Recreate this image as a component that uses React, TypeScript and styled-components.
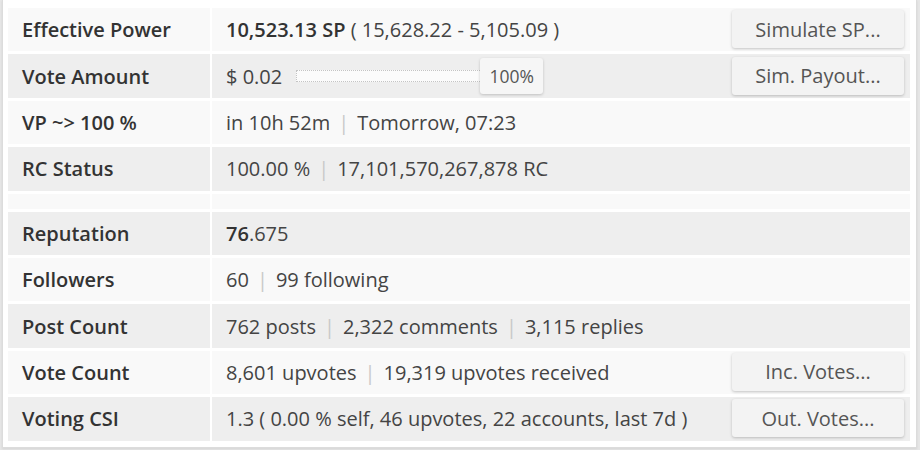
import React from "react";
import styled, { createGlobalStyle } from "styled-components";

const Global = createGlobalStyle`
  html, body { margin: 0; padding: 0; }
  body {
    background: #e6e6e6;
    font-family: "Open Sans", "Liberation Sans", sans-serif;
    width: 920px;
    height: 450px;
    overflow: hidden;
  }
`;

const Card = styled.div`
  margin-left: 2px;
  width: 902px;
  background: #ffffff;
  border: 1px solid #dcdcdc;
  border-top: none;
  padding: 8px 6px 6px 5px;
  box-shadow: 0 1px 2px rgba(0, 0, 0, 0.08);
`;

const Table = styled.div`
  display: flex;
  flex-direction: column;
  gap: 3px;
`;

const Row = styled.div<{ $dark?: boolean; $spacer?: boolean }>`
  display: grid;
  grid-template-columns: 202px 1fr;
  column-gap: 2px;
  height: ${(p) => (p.$spacer ? "15px" : "43.4px")};
  & > div {
    background: ${(p) => (p.$dark ? "#eeeeee" : "#f9f9f9")};
  }
`;

const Label = styled.div`
  display: flex;
  align-items: center;
  padding-left: 14px;
  font-size: 20px;
  font-weight: 600;
  color: #333;
`;

const Value = styled.div`
  display: flex;
  align-items: center;
  padding: 0 6px 0 14px;
  font-size: 20px;
  color: #444;
  white-space: nowrap;
`;

const Text = styled.span`
  flex: 1;
`;

const Strong = styled.b`
  font-weight: 600;
  color: #333;
`;

const Sep = styled.span`
  color: #c8c8c8;
  margin: 0 8px;
`;

const Button = styled.button`
  width: 172px;
  height: 38px;
  margin-top: -1px;
  border: none;
  border-radius: 3px;
  background: #f3f3f3;
  box-shadow: 0 1px 3px rgba(0, 0, 0, 0.22);
  font-family: inherit;
  font-size: 20px;
  color: #555;
  cursor: pointer;
`;

const Slider = styled.div`
  display: flex;
  align-items: center;
  margin-left: 14px;
  flex: 1;
`;

const Track = styled.div`
  width: 183px;
  height: 10px;
  border: 1px dotted #c4c4c4;
  border-right: none;
  background: #fbfbfb;
`;

const Thumb = styled.div`
  width: 63px;
  height: 36px;
  display: flex;
  align-items: center;
  justify-content: center;
  border-radius: 3px;
  background: #f6f6f6;
  box-shadow: 0 1px 3px rgba(0, 0, 0, 0.2);
  font-size: 17.5px;
  color: #555;
`;

type R = {
  label?: string;
  dark?: boolean;
  spacer?: boolean;
  content?: React.ReactNode;
  button?: string;
};

const S = () => <Sep>|</Sep>;

const rows: R[] = [
  {
    label: "Effective Power",
    content: (
      <Text>
        <Strong>10,523.13 SP</Strong> ( 15,628.22 - 5,105.09 )
      </Text>
    ),
    button: "Simulate SP...",
  },
  {
    label: "Vote Amount",
    dark: true,
    content: (
      <>
        <span>$ 0.02</span>
        <Slider>
          <Track />
          <Thumb>100%</Thumb>
        </Slider>
      </>
    ),
    button: "Sim. Payout...",
  },
  {
    label: "VP ~> 100 %",
    content: (
      <Text>
        in 10h 52m<S />Tomorrow, 07:23
      </Text>
    ),
  },
  {
    label: "RC Status",
    dark: true,
    content: (
      <Text>
        100.00 %<S />17,101,570,267,878 RC
      </Text>
    ),
  },
  { spacer: true },
  {
    label: "Reputation",
    dark: true,
    content: (
      <Text>
        <Strong>76</Strong>.675
      </Text>
    ),
  },
  {
    label: "Followers",
    content: (
      <Text>
        60<S />99 following
      </Text>
    ),
  },
  {
    label: "Post Count",
    dark: true,
    content: (
      <Text>
        762 posts<S />2,322 comments<S />3,115 replies
      </Text>
    ),
  },
  {
    label: "Vote Count",
    content: (
      <Text>
        8,601 upvotes<S />19,319 upvotes received
      </Text>
    ),
    button: "Inc. Votes...",
  },
  {
    label: "Voting CSI",
    dark: true,
    content: (
      <Text>1.3 ( 0.00 % self, 46 upvotes, 22 accounts, last 7d )</Text>
    ),
    button: "Out. Votes...",
  },
];

export default function App() {
  return (
    <>
      <Global />
      <Card>
        <Table>
          {rows.map((r, i) => (
            <Row key={i} $dark={r.dark} $spacer={r.spacer}>
              <Label>{r.label}</Label>
              <Value>
                {r.content}
                {r.button && <Button>{r.button}</Button>}
              </Value>
            </Row>
          ))}
        </Table>
      </Card>
    </>
  );
}
